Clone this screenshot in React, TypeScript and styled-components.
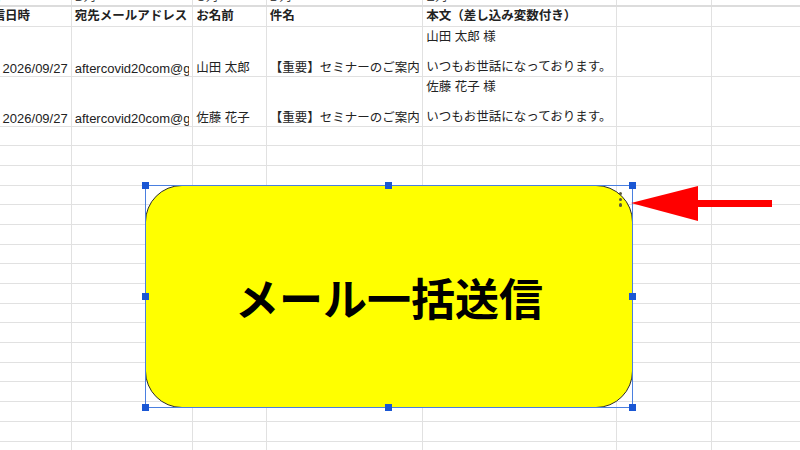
import React from "react";
import styled, { createGlobalStyle } from "styled-components";

const GlobalStyle = createGlobalStyle`
  html, body {
    margin: 0;
    padding: 0;
    background: #ffffff;
  }
  body {
    font-family: "Liberation Sans", "Noto Sans CJK JP", sans-serif;
  }
`;

const COLS = "94.7px 121.6px 73.4px 156.6px 194px 95.2px 160px";

const Sheet = styled.div`
  position: relative;
  width: 800px;
  height: 450px;
  overflow: hidden;
  background: #fff;
`;

const Grid = styled.div`
  margin-left: -23px;
  width: 896px;
  display: flex;
  flex-direction: column;
`;

const Row = styled.div<{ $h: number; $line?: string }>`
  display: grid;
  grid-template-columns: ${COLS};
  height: ${(p) => p.$h}px;
  flex: none;
  border-bottom: ${(p) => p.$line || "1px solid #e1e1e1"};
  box-sizing: border-box;
`;

type VAlign = "top" | "center" | "bottom";

const Cell = styled.div<{
  $align?: "left" | "right";
  $bold?: boolean;
  $valign?: VAlign;
  $latin?: boolean;
}>`
  box-sizing: border-box;
  border-right: 1px solid #e1e1e1;
  overflow: hidden;
  white-space: pre;
  display: flex;
  flex-direction: column;
  justify-content: ${(p) =>
    p.$valign === "top" ? "flex-start" : p.$valign === "center" ? "center" : "flex-end"};
  align-items: ${(p) => (p.$align === "right" ? "flex-end" : "flex-start")};
  padding: ${(p) => (p.$valign === "top" ? "3px 3px 0" : "0 3px 0")};
  font-size: ${(p) => (p.$latin ? "13px" : "12.5px")};
  line-height: 15px;
  font-weight: ${(p) => (p.$bold ? 700 : 400)};
  color: #222;
`;

/* clipped text, like a sheet cell whose neighbour is not empty */
const Clip = styled.span`
  display: block;
  max-width: 100%;
  overflow: hidden;
`;

const LetterCell = styled(Cell)`
  justify-content: flex-end;
  padding-bottom: 0;
  line-height: 16px;
  color: #444;
`;

const Shape = styled.div`
  position: absolute;
  left: 145px;
  top: 185px;
  width: 488px;
  height: 223px;
  box-sizing: border-box;
  background: #ffff00;
  border: 1px solid #2b2b2b;
  border-radius: 37px;
  display: flex;
  align-items: center;
  justify-content: center;
  font-family: "Noto Sans CJK JP", sans-serif;
  font-size: 44px;
  font-weight: 700;
  color: #000;
`;

const Frame = styled.div`
  position: absolute;
  left: 145px;
  top: 185px;
  width: 488px;
  height: 223px;
  box-sizing: border-box;
  border: 1px solid #4a7fe0;
  pointer-events: none;
`;

const Handle = styled.div<{ $x: number; $y: number }>`
  position: absolute;
  left: ${(p) => p.$x - 3.5}px;
  top: ${(p) => p.$y - 3.5}px;
  width: 7px;
  height: 7px;
  background: #1a57d4;
`;

const Dot = styled.div<{ $y: number }>`
  position: absolute;
  left: 618.5px;
  top: ${(p) => p.$y - 1.5}px;
  width: 3.5px;
  height: 3.5px;
  border-radius: 50%;
  background: #5a5a3a;
`;

const Arrow = styled.svg`
  position: absolute;
  left: 628px;
  top: 183px;
`;

const letters = ["A列", "B列", "C列", "D列", "E列", "", ""];
const headers = ["送信日時", "宛先メールアドレス", "お名前", "件名", "本文（差し込み変数付き）", "", ""];

const records = [
  { date: "2026/09/27", mail: "aftercovid20com@gmail.com", name: "山田 太郎" },
  { date: "2026/09/27", mail: "aftercovid20com@gmail.com", name: "佐藤 花子" },
];

const handles = [
  [145, 185], [388.5, 185], [632, 185],
  [145, 296], [632, 296],
  [145, 407], [388.5, 407], [632, 407],
];

export default function App() {
  return (
    <Sheet>
      <GlobalStyle />
      <Grid>
        <Row $h={7} $line="2px solid #dcdcdc">
          {letters.map((l, i) => (
            <LetterCell key={i}>{l}</LetterCell>
          ))}
        </Row>
        <Row $h={19.5}>
          {headers.map((h, i) => (
            <Cell key={i} $bold $valign="center">{h}</Cell>
          ))}
        </Row>
        {records.map((r, i) => (
          <Row $h={50} key={i}>
            <Cell $align="right" $latin>{r.date}</Cell>
            <Cell $latin><Clip>{r.mail}</Clip></Cell>
            <Cell>{r.name}</Cell>
            <Cell><Clip>【重要】セミナーのご案内</Clip></Cell>
            <Cell $valign="top">{`${r.name} 様\n\nいつもお世話になっております。`}</Cell>
            <Cell />
            <Cell />
          </Row>
        ))}
        {Array.from({ length: 17 }).map((_, i) => (
          <Row $h={19.7} key={i}>
            {Array.from({ length: 7 }).map((__, j) => (
              <Cell key={j} />
            ))}
          </Row>
        ))}
      </Grid>

      <Shape>メール一括送信</Shape>
      <Dot $y={193} />
      <Dot $y={199} />
      <Dot $y={204.5} />
      <Frame />
      {handles.map(([x, y], i) => (
        <Handle key={i} $x={x} $y={y} />
      ))}

      <Arrow width="150" height="42" viewBox="0 0 150 42">
        <polygon points="3,20 70,3 70,38" fill="#ff0000" />
        <rect x="69" y="17" width="75" height="7" fill="#ff0000" />
      </Arrow>
    </Sheet>
  );
}
